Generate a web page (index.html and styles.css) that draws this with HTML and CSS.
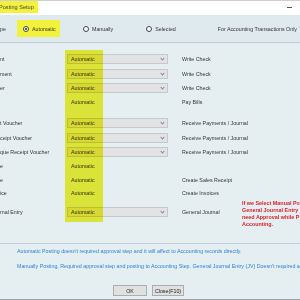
FILE: index.html
```html
<!DOCTYPE html>
<html>
<head>
<meta charset="utf-8">
<link rel="stylesheet" href="styles.css">
</head>
<body>
<div class="window">
  <div class="titlebar">
    <span class="title">Posting Setup</span>
    <span class="minimize"></span>
  </div>
  <div class="modebar">
    <span class="mode-label">pe</span>
    <span class="radio radio-auto checked"><span class="dot"></span>Automatic</span>
    <span class="radio radio-manual"><span class="dot"></span>Manually</span>
    <span class="radio radio-selected"><span class="dot"></span>Selected</span>
    <span class="mode-note">For Accounting Transactions Only</span>
  </div>
  <div class="rows">
    <div class="row"><span class="label">nt</span><span class="select">Automatic</span><span class="target">Write Check</span></div>
    <div class="row"><span class="label">ment</span><span class="select">Automatic</span><span class="target">Write Check</span></div>
    <div class="row"><span class="label">er</span><span class="select">Automatic</span><span class="target">Write Check</span></div>
    <div class="row plain"><span class="label"></span><span class="value">Automatic</span><span class="target">Pay Bills</span></div>
    <div class="row group-start"><span class="label">t Voucher</span><span class="select">Automatic</span><span class="target">Receive Payments / Journal</span></div>
    <div class="row"><span class="label">ceipt Voucher</span><span class="select">Automatic</span><span class="target">Receive Payments / Journal</span></div>
    <div class="row"><span class="label">que Receipt Voucher</span><span class="select">Automatic</span><span class="target">Receive Payments / Journal</span></div>
    <div class="row plain"><span class="label">e</span><span class="value">Automatic</span><span class="target"></span></div>
    <div class="row plain"><span class="label">e</span><span class="value">Automatic</span><span class="target">Create Sales Receipt</span></div>
    <div class="row plain"><span class="label">ice</span><span class="value">Automatic</span><span class="target">Create Invoices</span></div>
    <div class="row journal"><span class="label">rnal Entry</span><span class="select">Automatic</span><span class="target">General Journal</span>
      <span class="warning">If we Select Manual Po<br>General Journal Entry<br>need Approval while P<br>Accounting.</span></div>
    <div class="highlight-strip"></div>
  </div>
  <div class="notes">
    <p>Automatic Posting doesn't required approval step and it will affect to Accounting records directly.</p>
    <p class="second">Manually Posting, Required approval step and posting to Accounting Step. General Journal Entry (JV) Doesn't required appro</p>
  </div>
  <div class="buttons">
    <span class="btn btn-ok">OK</span>
    <span class="btn btn-close">Close(F10)</span>
  </div>
</div>
</body>
</html>
```

FILE: styles.css
```css
html, body {
  margin: 0;
  padding: 0;
}
body {
  width: 300px;
  height: 300px;
  overflow: hidden;
  background: #e5eff2;
  font-family: "Liberation Sans", Arial, sans-serif;
  font-size: 5.3px;
  color: #333;
}
.window {
  width: 300px;
  height: 300px;
  display: flex;
  flex-direction: column;
  box-sizing: border-box;
  border-bottom: 1px solid #9aa5aa;
  position: relative;
  overflow: hidden;
}
.titlebar {
  height: 15px;
  flex: none;
  background: #fff;
  display: flex;
  align-items: flex-start;
  border-top: 1px solid #d0d0d0;
  box-sizing: border-box;
}
.title {
  background: #f2f23c;
  height: 12px;
  width: 38px;
  line-height: 12px;
  font-size: 5.6px;
  color: #444;
  white-space: nowrap;
  overflow: hidden;
  text-indent: -1px;
}
.minimize {
  margin-left: auto;
  margin-right: 8px;
  margin-top: 6px;
  width: 5px;
  height: 1px;
  background: #555;
}
.modebar {
  height: 28px;
  flex: none;
  box-sizing: border-box;
  background: #dfeaee;
  border-bottom: 1px solid #c3cdd1;
  display: flex;
  align-items: center;
  white-space: nowrap;
}
.mode-label {
  width: 17px;
  flex: none;
}
.radio {
  display: flex;
  align-items: center;
  flex: none;
}
.dot {
  width: 6px;
  height: 6px;
  box-sizing: border-box;
  border: 1px solid #444;
  border-radius: 50%;
  background: #fff;
  margin-right: 3px;
  display: flex;
  align-items: center;
  justify-content: center;
}
.checked .dot::after {
  content: "";
  width: 2px;
  height: 2px;
  border-radius: 50%;
  background: #222;
}
.radio-auto {
  width: 43px;
  height: 17px;
  box-sizing: border-box;
  padding-left: 6px;
  background: #f2f23c;
}
.radio-manual {
  margin-left: 23px;
}
.radio-selected {
  margin-left: 33px;
}
.mode-note {
  margin-left: auto;
  margin-right: 3px;
}
.rows {
  position: relative;
  padding-top: 8.75px;
  flex: none;
  height: 200px;
  box-sizing: border-box;
}
.row {
  display: grid;
  grid-template-columns: 67px 101px 1fr;
  align-items: center;
  height: 14.5px;
  white-space: nowrap;
}
.row.plain {
  height: 13.5px;
}
.row.group-start {
  margin-top: 7px;
}
.row.journal {
  margin-top: 5px;
  grid-template-columns: 67px 101px 74px auto;
}
.label {
  overflow: hidden;
}
.target {
  padding-left: 14px;
}
.select {
  height: 10px;
  box-sizing: border-box;
  border: 1px solid #c6c9cb;
  background: #e2e3e4;
  padding-left: 3px;
  line-height: 8px;
  position: relative;
  color: #333;
}
.select::after {
  content: "";
  position: absolute;
  right: 3px;
  top: 2.2px;
  width: 2px;
  height: 2px;
  border-right: 0.8px solid #888;
  border-bottom: 0.8px solid #888;
  transform: rotate(45deg);
}
.value {
  padding-left: 4px;
}
.warning {
  font-weight: bold;
  color: #d8232a;
  font-size: 5.4px;
  line-height: 7px;
  margin: -5px 0 -9px 0;
  overflow: hidden;
}
.highlight-strip {
  position: absolute;
  left: 65px;
  top: 7px;
  width: 38px;
  height: 172px;
  background: #f3f33a;
  mix-blend-mode: multiply;
  pointer-events: none;
}
.notes {
  border-top: 1px solid #c3cdd1;
  padding: 2px 0 0 17px;
  flex: none;
  height: 42px;
  box-sizing: border-box;
  white-space: nowrap;
  color: #2b7fd6;
  overflow: hidden;
}
.notes p {
  margin: 0;
  line-height: 11px;
}
.notes p.second {
  margin-top: 4px;
}
.buttons {
  display: flex;
  gap: 5px;
  padding-left: 113px;
  flex: none;
}
.btn {
  height: 11px;
  box-sizing: border-box;
  border: 1px solid #adadad;
  background: #e1e1e1;
  display: flex;
  align-items: center;
  justify-content: center;
  color: #222;
}
.btn-ok {
  width: 34px;
}
.btn-close {
  width: 32px;
}
```
